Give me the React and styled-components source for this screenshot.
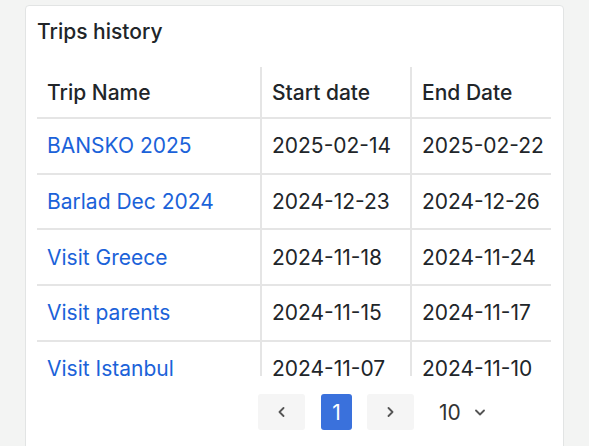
import React from "react";
import styled, { createGlobalStyle } from "styled-components";

const Global = createGlobalStyle`
  html, body { margin: 0; padding: 0; }
  body {
    background: #f3f4f3;
    font-family: Inter, "Noto Sans", sans-serif;
    color: #212529;
    overflow: hidden;
  }
`;

const Card = styled.section`
  margin: 5px 0 0 25px;
  width: 539px;
  height: 460px;
  box-sizing: border-box;
  background: #fff;
  border: 1px solid #e2e4e4;
  border-radius: 4px;
  padding: 13px 12px 0 11px;
`;

const Title = styled.h2`
  margin: 0;
  font-size: 21px;
  font-weight: 500;
  line-height: 25px;
  color: #212529;
`;

const TableWrap = styled.div`
  margin-top: 23px;
  height: 309px;
  overflow: hidden;
`;

const Table = styled.table`
  width: 514px;
  border-collapse: collapse;
  table-layout: fixed;
  font-size: 21px;
`;

const Th = styled.th`
  text-align: left;
  font-weight: 500;
  height: 51px;
  padding: 0 10px;
  border-bottom: 2px solid #e5e5e5;
  border-left: ${(p) => (p.$first ? "none" : "2px solid #e5e5e5")};
  width: ${(p) => p.$w}px;
  box-sizing: border-box;
`;

const Td = styled.td`
  height: 55.7px;
  padding: 0 10px;
  font-weight: 400;
  border-bottom: 2px solid #e5e5e5;
  border-left: ${(p) => (p.$first ? "none" : "2px solid #e5e5e5")};
  white-space: nowrap;
  box-sizing: border-box;
`;

const Link = styled.a`
  color: #1b62d9;
  text-decoration: none;
`;

const Pager = styled.nav`
  display: flex;
  align-items: center;
  margin-top: 18px;
  padding-left: 221px;
`;

const PageBtn = styled.button`
  display: flex;
  align-items: center;
  justify-content: center;
  flex: none;
  height: 36px;
  width: ${(p) => (p.$active ? 31 : 47)}px;
  margin-right: ${(p) => p.$gap}px;
  border: none;
  border-radius: 3px;
  padding: 0;
  background: ${(p) => (p.$active ? "#3a71dc" : "#f5f5f5")};
  color: ${(p) => (p.$active ? "#fff" : "#555")};
  font-family: inherit;
  font-size: 21px;
`;

const Select = styled.div`
  display: flex;
  align-items: center;
  gap: 14px;
  margin-left: 10px;
  font-size: 21px;
  color: #333;
`;

const Chevron = ({ dir }) => {
  const paths = {
    left: "M5.5 1 L1.5 5 L5.5 9",
    right: "M1.5 1 L5.5 5 L1.5 9",
    down: "M1 1.5 L5 5.5 L9 1.5",
  };
  const w = dir === "down" ? 10 : 7;
  const h = dir === "down" ? 7 : 10;
  return (
    <svg width={w} height={h} viewBox={`0 0 ${w} ${h}`} fill="none">
      <path d={paths[dir]} stroke="#555" strokeWidth="1.8" strokeLinecap="round" strokeLinejoin="round" />
    </svg>
  );
};

const trips = [
  ["BANSKO 2025", "2025-02-14", "2025-02-22"],
  ["Barlad Dec 2024", "2024-12-23", "2024-12-26"],
  ["Visit Greece", "2024-11-18", "2024-11-24"],
  ["Visit parents", "2024-11-15", "2024-11-17"],
  ["Visit Istanbul", "2024-11-07", "2024-11-10"],
  ["Summer trip", "2024-08-01", "2024-08-10"],
];

export default function App() {
  return (
    <>
      <Global />
      <Card>
        <Title>Trips history</Title>
        <TableWrap>
          <Table>
            <thead>
              <tr>
                <Th $first $w={224}>Trip Name</Th>
                <Th $w={150}>Start date</Th>
                <Th $w={140}>End Date</Th>
              </tr>
            </thead>
            <tbody>
              {trips.map(([name, start, end]) => (
                <tr key={name}>
                  <Td $first>
                    <Link href="#">{name}</Link>
                  </Td>
                  <Td>{start}</Td>
                  <Td>{end}</Td>
                </tr>
              ))}
            </tbody>
          </Table>
        </TableWrap>
        <Pager>
          <PageBtn $gap={16}><Chevron dir="left" /></PageBtn>
          <PageBtn $active $gap={15}>1</PageBtn>
          <PageBtn $gap={15}><Chevron dir="right" /></PageBtn>
          <Select>
            <span>10</span>
            <Chevron dir="down" />
          </Select>
        </Pager>
      </Card>
    </>
  );
}
